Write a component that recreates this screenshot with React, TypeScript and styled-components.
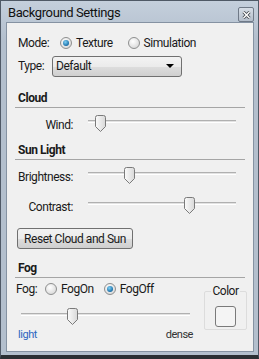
import React from 'react'
import styled, { createGlobalStyle } from 'styled-components'

const GlobalStyle = createGlobalStyle`
  html, body {
    margin: 0;
    padding: 0;
    background: #ffffff;
  }
  body {
    font-family: Roboto, 'Liberation Sans', Arial, sans-serif;
    font-size: 12px;
    letter-spacing: -0.45px;
    color: #1a1a1a;
  }
`

const Window = styled.div`
  width: 259px;
  height: 359px;
  box-sizing: border-box;
  border: 1px solid #4f5966;
  border-bottom: 4px solid #2b2f33;
  background: linear-gradient(#c4cfdc, #b3bfcd 40px, #b3bfcd);
  display: flex;
  flex-direction: column;
`

const TitleBar = styled.div`
  height: 21px;
  display: flex;
  align-items: flex-start;
  justify-content: space-between;
  padding: 0 4px 0 7px;
`

const Title = styled.span`
  padding-top: 4px;
  font-size: 13px;
  color: #111;
  letter-spacing: -0.4px;
`

const CloseButton = styled.div`
  width: 14px;
  height: 13px;
  margin-top: 6px;
  border: 1px solid #6f7987;
  border-radius: 2px;
  background: linear-gradient(#d6dde6, #b4becb);
  display: flex;
  align-items: center;
  justify-content: center;
`

const Body = styled.div`
  flex: 1;
  margin: 0 4px 3px 5px;
  border: 1px solid #8592a2;
  background: #f0f0f0;
  padding: 0 8px;
  display: flex;
  flex-direction: column;
`

const Row = styled.div<{ h: number; indent?: number }>`
  height: ${({ h }) => h}px;
  display: flex;
  align-items: center;
  padding-left: ${({ indent = 3 }) => indent}px;
`

const Label = styled.span<{ w?: number }>`
  width: ${({ w }) => (w ? w + 'px' : 'auto')};
  flex: none;
`

const SectionHeader = styled.div<{ top: number }>`
  margin-top: ${({ top }) => top}px;
  height: 14px;
  padding: 0 0 2px 3px;
  font-weight: bold;
  line-height: 14px;
  border-bottom: 1px solid #a5a5a5;
`

const RadioWrap = styled.label<{ gap: number }>`
  display: flex;
  align-items: center;
  gap: 4px;
  margin-right: ${({ gap }) => gap}px;
`

const RadioCircle = styled.span<{ checked: boolean }>`
  width: 10px;
  height: 10px;
  border-radius: 50%;
  border: 1px solid #8e8f8f;
  background: radial-gradient(circle at 40% 35%, #ffffff, #d9d9d9 80%);
  display: flex;
  align-items: center;
  justify-content: center;
  &::after {
    content: '';
    display: ${({ checked }) => (checked ? 'block' : 'none')};
    width: 6px;
    height: 6px;
    border-radius: 50%;
    background: radial-gradient(circle at 40% 35%, #7fd0f5, #1a6fa8 70%, #144d7a);
  }
`

function Radio({ label, checked, gap = 10 }: { label: string; checked?: boolean; gap?: number }) {
  return (
    <RadioWrap gap={gap}>
      <RadioCircle checked={!!checked} />
      {label}
    </RadioWrap>
  )
}

const Select = styled.div`
  width: 130px;
  height: 21px;
  box-sizing: border-box;
  border: 1px solid #707070;
  border-radius: 3px;
  background: linear-gradient(#f3f3f3 0%, #ebebeb 50%, #dddddd 51%, #cfcfcf 100%);
  display: flex;
  align-items: center;
  justify-content: space-between;
  padding: 0 7px 0 3px;
`

const Caret = styled.span`
  width: 0;
  height: 0;
  border-left: 4px solid transparent;
  border-right: 4px solid transparent;
  border-top: 4px solid #000;
`

const SliderRow = styled.div`
  height: 30px;
  display: flex;
  align-items: center;
  padding-left: 3px;
`

const SliderLabel = styled.span`
  width: 55px;
  text-align: right;
  margin-right: 15px;
  margin-top: 4px;
`

const Track = styled.div<{ w: number }>`
  position: relative;
  width: ${({ w }) => w}px;
  height: 17px;
  flex: none;
  &::before {
    content: '';
    position: absolute;
    left: 0;
    right: 0;
    top: 5px;
    height: 3px;
    box-sizing: border-box;
    border-top: 1px solid #b0b0b0;
    border-bottom: 1px solid #ffffff;
    background: #e2e2e2;
  }
`

const Thumb = styled.svg`
  position: absolute;
  top: 0;
`

function Slider({ width, value }: { width: number; value: number }) {
  const left = Math.round((width - 11) * value)
  return (
    <Track w={width}>
      <Thumb width="11" height="17" viewBox="0 0 11 17" style={{ left }}>
        <defs>
          <linearGradient id="tg" x1="0" x2="1" y1="0" y2="0">
            <stop offset="0" stopColor="#fbfbfb" />
            <stop offset="1" stopColor="#d8d8d8" />
          </linearGradient>
        </defs>
        <path
          d="M0.5 2.5 Q0.5 0.5 2.5 0.5 H8.5 Q10.5 0.5 10.5 2.5 V11.5 L5.5 16.5 L0.5 11.5 Z"
          fill="url(#tg)"
          stroke="#7a7a7a"
        />
      </Thumb>
    </Track>
  )
}

const Button = styled.div`
  margin: 8px 0 0 2px;
  width: 116px;
  height: 21px;
  box-sizing: border-box;
  border: 1px solid #707070;
  border-radius: 3px;
  background: linear-gradient(#f2f2f2 0%, #ebebeb 50%, #dddddd 51%, #cfcfcf 100%);
  display: flex;
  align-items: center;
  justify-content: center;
`

const FogArea = styled.div`
  display: flex;
  justify-content: space-between;
`

const FogLeft = styled.div`
  display: flex;
  flex-direction: column;
`

const FogSlider = styled.div`
  padding: 8px 0 0 6px;
`

const ScaleLabels = styled.div`
  display: flex;
  justify-content: space-between;
  width: 175px;
  padding-left: 3px;
  margin-top: 3px;
  font-size: 11px;
  line-height: 13px;
`

const LightText = styled.span`
  color: #2c66c0;
`

const DenseText = styled.span`
  color: #333;
`

const ColorGroup = styled.fieldset`
  margin: 6px -2px 0 0;
  padding: 0;
  width: 41px;
  height: 44px;
  box-sizing: content-box;
  border: 1px solid #dcdcdc;
  border-radius: 2px;
  display: flex;
  justify-content: center;
  legend {
    padding: 0 1px;
    margin: 0 auto;
    font-size: 12px;
  }
`

const Swatch = styled.div`
  width: 19px;
  height: 19px;
  margin-top: 8px;
  border: 1px solid #7a7a7a;
  border-radius: 3px;
  background: #f4f4f4;
`

export default function App() {
  return (
    <>
      <GlobalStyle />
      <Window>
        <TitleBar>
          <Title>Background Settings</Title>
          <CloseButton>
            <svg width="9" height="8" viewBox="0 0 9 8">
              <path d="M1.5 1 L7.5 7 M7.5 1 L1.5 7" stroke="#3b3f45" strokeWidth="3" />
              <path d="M1.5 1 L7.5 7 M7.5 1 L1.5 7" stroke="#ffffff" strokeWidth="1.5" />
            </svg>
          </CloseButton>
        </TitleBar>
        <Body>
          <Row h={22} style={{ marginTop: 9 }}>
            <Label w={42}>Mode:</Label>
            <Radio label="Texture" checked gap={15} />
            <Radio label="Simulation" />
          </Row>
          <Row h={24}>
            <Label w={34}>Type:</Label>
            <Select>
              <span>Default</span>
              <Caret />
            </Select>
          </Row>
          <SectionHeader top={13}>Cloud</SectionHeader>
          <SliderRow>
            <SliderLabel>Wind:</SliderLabel>
            <Slider width={148} value={0.05} />
          </SliderRow>
          <SectionHeader top={5}>Sun Light</SectionHeader>
          <SliderRow>
            <SliderLabel>Brightness:</SliderLabel>
            <Slider width={148} value={0.26} />
          </SliderRow>
          <SliderRow>
            <SliderLabel>Contrast:</SliderLabel>
            <Slider width={148} value={0.7} />
          </SliderRow>
          <Button>Reset Cloud and Sun</Button>
          <SectionHeader top={12}>Fog</SectionHeader>
          <FogArea>
            <FogLeft>
              <Row h={22} indent={1}>
                <Label w={29}>Fog:</Label>
                <Radio label="FogOn" />
                <Radio label="FogOff" checked />
              </Row>
              <FogSlider>
                <Slider width={169} value={0.29} />
              </FogSlider>
              <ScaleLabels>
                <LightText>light</LightText>
                <DenseText>dense</DenseText>
              </ScaleLabels>
            </FogLeft>
            <ColorGroup>
              <legend>Color</legend>
              <Swatch />
            </ColorGroup>
          </FogArea>
        </Body>
      </Window>
    </>
  )
}
